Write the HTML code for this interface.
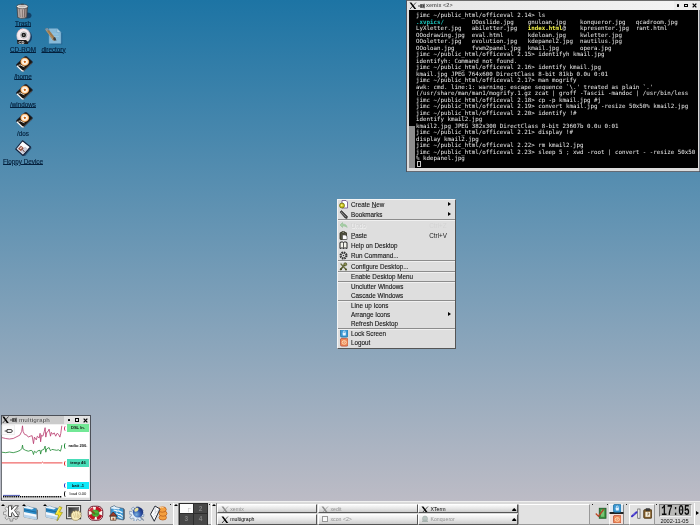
<!DOCTYPE html>
<html>
<head>
<meta charset="utf-8">
<title>KDE Desktop</title>
<style>
html,body{margin:0;padding:0;}
body{width:700px;height:525px;overflow:hidden;position:relative;
  background:linear-gradient(to bottom, rgb(29,116,164) 0px, rgb(196,191,199) 525px);
  font-family:"Liberation Sans",sans-serif;}
#root{position:absolute;left:0;top:0;width:700px;height:525px;will-change:transform;}
.abs{position:absolute;}
/* desktop icons */
.dlabel{position:absolute;font-size:6.300px;line-height:8px;color:#04203c;-webkit-text-stroke:0.150px #04203c;text-decoration:underline;text-decoration-thickness:0.800px;text-underline-offset:0.100px;white-space:nowrap;text-align:center;}
/* xterm */
#xterm{position:absolute;left:406px;top:0;width:294px;height:171.700px;background:#dcdcdc;box-sizing:border-box;border:0 solid #555;border-left:1px solid #4c5460;box-shadow:inset -0.600px -0.700px 0 #3c4450;}
#xterm .tbar{position:absolute;left:0;top:0;right:0;height:10px;background:linear-gradient(to right,#e6e6e6,#f4f4f4);border-top:1px solid #6c6c6c;box-sizing:border-box;}
.ttext{position:absolute;font-family:"Liberation Sans",sans-serif;font-weight:bold;color:#5c5c5c;font-size:6px;line-height:9px;white-space:nowrap;text-shadow:0.400px 0.400px 0 #fff;will-change:transform;}
#term{position:absolute;left:1.500px;top:10px;width:289.200px;height:157.700px;background:#000;}
#term pre{position:absolute;left:7.600px;top:2px;margin:0;font-family:"DejaVu Sans Mono","Liberation Mono",monospace;font-size:5.814px;line-height:6.500px;color:#ececec;letter-spacing:0;will-change:transform;}
#term .c{color:#1cc4bc;font-weight:bold;}
#term .y{color:#f0f048;font-weight:bold;}
#sbar{position:absolute;left:0.500px;top:116.100px;width:6px;height:41.600px;background:#8e8e8e;}
#cur{position:absolute;left:8.500px;top:150.700px;width:3.700px;height:6.200px;border:0.700px solid #c8c8c8;box-sizing:border-box;}
.xlogo{position:absolute;}
/* menu */
#menu{position:absolute;left:337px;top:199px;width:119px;height:150px;background:#dedede;box-sizing:border-box;border:1px solid;border-color:#f4f4f4 #555 #555 #f4f4f4;}
.mi{position:absolute;left:13px;font-size:6.3px;line-height:8px;color:#141414;-webkit-text-stroke:0.100px #141414;white-space:nowrap;}
.mi.dis{color:#d2d2d2;-webkit-text-stroke:0;text-shadow:0.500px 0.500px 0 #f4f4f4;}
.mi u{text-decoration-thickness:0.600px;text-underline-offset:0.200px;text-decoration-color:#777;}
.msep{position:absolute;left:0;right:0;height:0;border-top:1px solid #8c8c8c;border-bottom:1px solid #f0f0f0;}
.marr{position:absolute;left:109.800px;width:0;height:0;border-left:3.300px solid #000;border-top:2.500px solid transparent;border-bottom:2.500px solid transparent;margin-top:-0.300px;}
.macc{position:absolute;left:91.3px;font-size:6.3px;line-height:8px;color:#222;}
/* multigraph */
#mg{position:absolute;left:0;top:0;width:0;height:0;}
.wbtn{position:absolute;box-sizing:content-box;}
.glab{position:absolute;left:66.500px;width:22.900px;height:7.800px;font-size:4.100px;line-height:7.800px;font-weight:bold;color:#111;text-align:center;white-space:nowrap;}
.gmk{position:absolute;left:63.800px;width:2px;height:5.5px;border-left:1.2px solid;border-radius:3px 0 0 3px;box-sizing:border-box;}
/* panel */
#panel{position:absolute;left:0;top:501.400px;width:700px;height:23.600px;background:#dadada;border-top:0.600px solid #f0f0f0;border-bottom:0.800px solid #8c8c8c;box-sizing:border-box;}
.tri{position:absolute;width:0;height:0;border-bottom:2.300px solid #000;border-left:2.300px solid transparent;border-right:2.300px solid transparent;margin-left:-0.300px;}
.pg{position:absolute;width:13.400px;height:9.500px;background:#474747;color:#808080;font-size:6.500px;line-height:9.500px;text-align:center;font-weight:bold;}
.tb{position:absolute;height:9.5px;width:100px;box-sizing:border-box;background:linear-gradient(#fafafa,#e6e6e6 50%,#cdcdcd);border:0.500px solid #555;border-top-color:#fff;border-left-color:#fff;font-size:5.200px;line-height:8px;color:#909090;white-space:nowrap;overflow:hidden;}
.tb b{font-weight:normal;position:absolute;left:12px;top:0;}
.tb.act{color:#000;}
</style>
</head>
<body>
<div id="root">

<!-- ================= DESKTOP ICONS ================= -->
<div id="desk">
<svg class="abs" style="left:15.500px;top:2.800px" width="16" height="16.500" viewBox="0 0 32 33">
<defs><linearGradient id="tr" x1="0" x2="1"><stop offset="0" stop-color="#8c807c"/><stop offset="0.3" stop-color="#d8ccc8"/><stop offset="0.7" stop-color="#b4a4a0"/><stop offset="1" stop-color="#6c6060"/></linearGradient></defs>
<ellipse cx="22" cy="25" rx="9" ry="6" fill="#103458" opacity="0.800"/>
<path d="M2 8l1.500 21q8.500 4 18 0l1.500-21z" fill="url(#tr)" stroke="#3c3838" stroke-width="1.300"/>
<path d="M7.500 12l0.800 16M12.500 13v16M17.500 12l-0.800 16" stroke="#6c605c" stroke-width="1.800"/>
<ellipse cx="12.500" cy="7" rx="11.500" ry="4.500" fill="#e8e4e0" stroke="#3c3838" stroke-width="1.300"/>
<ellipse cx="12.500" cy="6.500" rx="7" ry="2.200" fill="#bcb4b0"/>
<path d="M9.500 2.500h6" stroke="#444" stroke-width="2"/>
</svg>
<svg class="abs" style="left:15.500px;top:28.200px" width="16.500" height="17" viewBox="0 0 33 34">
<defs><radialGradient id="cdg" cx="0.45" cy="0.4" r="0.6"><stop offset="0" stop-color="#fff"/><stop offset="0.6" stop-color="#f4e8ec"/><stop offset="1" stop-color="#c8c4d0"/></radialGradient></defs>
<ellipse cx="19" cy="18" rx="13" ry="14" fill="#102c50" opacity="0.800"/>
<ellipse cx="15" cy="15.500" rx="14" ry="14.500" fill="url(#cdg)" stroke="#8890a0" stroke-width="0.800"/>
<path d="M4 8q4-6 10-6" stroke="#f8c8d0" stroke-width="2" fill="none"/>
<path d="M26 22q-3 6-8 7" stroke="#d0e0c0" stroke-width="2" fill="none"/>
<circle cx="15.500" cy="14" r="6.500" fill="#e4e4e8" stroke="#666" stroke-width="0.800"/>
<circle cx="15.500" cy="14" r="4.600" fill="#181818"/>
<circle cx="15.500" cy="14" r="1.600" fill="#aaa"/>
<path d="M2 24h18l4 4v4H3z" fill="#1c1c1c"/>
<text x="5" y="31.500" font-family="Liberation Sans, sans-serif" font-weight="bold" font-size="8" fill="#f0f0f0">CD</text>
</svg>
<svg class="abs" style="left:44px;top:27px;opacity:0.820" width="18.500" height="17.500" viewBox="0 0 37 35">
<path d="M12 5h16l7 7v22H12z" fill="#1c4c78" opacity="0.500" transform="translate(1.500,1)"/>
<path d="M10 3h16l8 8v22H10z" fill="#9cc8e4" stroke="#6a9cc0" stroke-width="1"/>
<path d="M26 3v8h8z" fill="#d4e8f4" stroke="#6a9cc0" stroke-width="0.800"/>
<path d="M14 14h14M14 19h16M14 24h12" stroke="#b8dcf0" stroke-width="1.500"/>
<path d="M2 4l5-2 17 22-2 3-4 0z" fill="#b87838"/>
<path d="M2 4l5-2 3 4-5 2z" fill="#8c9cb0"/>
<path d="M18 22l4-2 3 7-5 0z" fill="#40342c"/>
<path d="M4 6l14 18" stroke="#e0a868" stroke-width="1.500"/>
</svg>
<svg class="abs" style="left:15.500px;top:56px" width="17" height="16" viewBox="0 0 34 32">
<defs><radialGradient id="pl0" cx="0.5" cy="0.5" r="0.5"><stop offset="0" stop-color="#b85810"/><stop offset="0.2" stop-color="#d87828"/><stop offset="0.32" stop-color="#fffaf2"/><stop offset="0.66" stop-color="#fce4c8"/><stop offset="0.86" stop-color="#eea458"/><stop offset="1" stop-color="#a05c20"/></radialGradient></defs>
<path d="M18 0.800Q20 0 22 1.500L32 10.500Q33.500 12.500 32 14.500L16 30Q13.600 31.500 11.500 30L1.500 20Q0 18 1.500 16Z" fill="#1a1612" stroke="#1c2c48" stroke-width="1.200"/>
<path d="M1.800 19.500L12 29.500Q13.800 30.600 15.500 29.300" stroke="#fbfbfb" stroke-width="2.600" fill="none"/>
<path d="M16 29l15.500-15" stroke="#8c8c8c" stroke-width="1.200"/>
<ellipse cx="17.500" cy="11.500" rx="9" ry="8.600" fill="url(#pl0)"/>
<path d="M5 18.500q4-2 7 1l5 2" stroke="#f4e4d0" stroke-width="1.800" fill="none"/>
</svg>
<svg class="abs" style="left:15.500px;top:84px" width="17" height="16" viewBox="0 0 34 32">
<defs><radialGradient id="pl1" cx="0.5" cy="0.5" r="0.5"><stop offset="0" stop-color="#b85810"/><stop offset="0.2" stop-color="#d87828"/><stop offset="0.32" stop-color="#fffaf2"/><stop offset="0.66" stop-color="#fce4c8"/><stop offset="0.86" stop-color="#eea458"/><stop offset="1" stop-color="#a05c20"/></radialGradient></defs>
<path d="M18 0.800Q20 0 22 1.500L32 10.500Q33.500 12.500 32 14.500L16 30Q13.600 31.500 11.500 30L1.500 20Q0 18 1.500 16Z" fill="#1a1612" stroke="#1c2c48" stroke-width="1.200"/>
<path d="M1.800 19.500L12 29.500Q13.800 30.600 15.500 29.300" stroke="#fbfbfb" stroke-width="2.600" fill="none"/>
<path d="M16 29l15.500-15" stroke="#8c8c8c" stroke-width="1.200"/>
<ellipse cx="17.500" cy="11.500" rx="9" ry="8.600" fill="url(#pl1)"/>
<path d="M5 18.500q4-2 7 1l5 2" stroke="#f4e4d0" stroke-width="1.800" fill="none"/>
</svg>
<svg class="abs" style="left:15.500px;top:111.600px" width="17" height="16" viewBox="0 0 34 32">
<defs><radialGradient id="pl2" cx="0.5" cy="0.5" r="0.5"><stop offset="0" stop-color="#b85810"/><stop offset="0.2" stop-color="#d87828"/><stop offset="0.32" stop-color="#fffaf2"/><stop offset="0.66" stop-color="#fce4c8"/><stop offset="0.86" stop-color="#eea458"/><stop offset="1" stop-color="#a05c20"/></radialGradient></defs>
<path d="M18 0.800Q20 0 22 1.500L32 10.500Q33.500 12.500 32 14.500L16 30Q13.600 31.500 11.500 30L1.500 20Q0 18 1.500 16Z" fill="#1a1612" stroke="#1c2c48" stroke-width="1.200"/>
<path d="M1.800 19.500L12 29.500Q13.800 30.600 15.500 29.300" stroke="#fbfbfb" stroke-width="2.600" fill="none"/>
<path d="M16 29l15.500-15" stroke="#8c8c8c" stroke-width="1.200"/>
<ellipse cx="17.500" cy="11.500" rx="9" ry="8.600" fill="url(#pl2)"/>
<path d="M5 18.500q4-2 7 1l5 2" stroke="#f4e4d0" stroke-width="1.800" fill="none"/>
</svg>
<svg class="abs" style="left:14.800px;top:139.500px" width="17" height="16.500" viewBox="0 0 34 33">
<path d="M17 3l15 12-14 17L3 19z" fill="#18304c" opacity="0.600" transform="translate(1.500,1)"/>
<path d="M15 1.500l16 12.500-15 17L1.500 18z" fill="#e6e6ec" stroke="#14223c" stroke-width="2.300" stroke-linejoin="round"/>
<path d="M15 4l13 10-5 6-13-10z" fill="#fbfbfd"/>
<path d="M6 17.500l6-6 6 5-6 6z" fill="#985040"/>
<path d="M9.500 17l3-3 2 1.500-3 3z" fill="#f0d8d0"/>
<path d="M12 23l8-9 5 4-8 9z" fill="#d0d0dc" stroke="#9a9aac" stroke-width="0.600"/>
<path d="M15 19l4 5" stroke="#70483c" stroke-width="2"/>
</svg>
<div class="dlabel" style="left:8px;top:19.900px;width:30px;">Trash</div>
<div class="dlabel" style="left:8px;top:45.900px;width:30px;">CD-ROM</div>
<div class="dlabel" style="left:38px;top:45.900px;width:31px;">directory</div>
<div class="dlabel" style="left:8px;top:73.400px;width:30px;">/home</div>
<div class="dlabel" style="left:8px;top:101.400px;width:30px;">/windows</div>
<div class="dlabel" style="left:8px;top:129.900px;width:30px;text-decoration:none;">/dos</div>
<div class="dlabel" style="left:0px;top:158.400px;width:46px;">Floppy Device</div>
</div>

<!-- ================= XTERM ================= -->
<div id="xterm">
 <div class="tbar"></div>
 <svg class="abs" style="left:2px;top:1.800px" width="8" height="7.500" viewBox="0 0 16 15"><path d="M1 1h3.800l9.700 13h-3.800z" fill="#000"/><path d="M14 1L2 14" stroke="#000" stroke-width="1.300"/></svg>
 <svg class="abs" style="left:10.500px;top:2.500px" width="7.500" height="6" viewBox="0 0 15 12"><path d="M0 6h5" stroke="#222" stroke-width="1.600"/><path d="M5.600 2v8" stroke="#222" stroke-width="1.600"/><rect x="6.400" y="3.600" width="4.600" height="4.800" fill="#888" stroke="#222" stroke-width="1.300"/><path d="M12.300 1.500v9" stroke="#222" stroke-width="1.800"/></svg>
 <div class="ttext" style="left:18.800px;top:1px;font-size:5.500px;">xemix &lt;2&gt;</div>
 <div class="abs" style="left:267px;top:1px;width:25.500px;height:9px;background:#ececec;"></div>
 <div class="wbtn" style="left:269.500px;top:4.400px;width:2.300px;height:2.300px;background:#000;border-radius:0.600px"></div>
 <div class="wbtn" style="left:276.800px;top:3.500px;width:1.900px;height:1.700px;border:1.200px solid #000;"></div>
 <svg class="abs" style="left:284.500px;top:3.100px" width="5" height="5" viewBox="0 0 6 6"><path d="M0.800 0.800l4.400 4.400M5.200 0.800L0.800 5.200" stroke="#000" stroke-width="1.500"/></svg>
 <div id="term">
<div id="sbar"></div><div id="cur"></div>
<pre>jimc ~/public_html/officeval 2.14&gt; ls
<span class="c">.xvpics/</span>        OOoslide.jpg    gnuloan.jpg    konqueror.jpg   qcadroom.jpg
LyXletter.jpg   abiletter.jpg   <span class="y">index.html</span>@    kpresenter.jpg  rant.html
OOodrawing.jpg  eval.html       kdeloan.jpg    kwletter.jpg
OOoletter.jpg   evolution.jpg   kdepanel2.jpg  nautilus.jpg
OOoloan.jpg     fvwm2panel.jpg  kmail.jpg      opera.jpg
jimc ~/public_html/officeval 2.15&gt; identifyh kmail.jpg
identifyh: Command not found.
jimc ~/public_html/officeval 2.16&gt; identify kmail.jpg
kmail.jpg JPEG 764x600 DirectClass 8-bit 81kb 0.0u 0:01
jimc ~/public_html/officeval 2.17&gt; man mogrify
awk: cmd. line:1: warning: escape sequence `\.' treated as plain `.'
(/usr/share/man/man1/mogrify.1.gz zcat | groff -Tascii -mandoc | /usr/bin/less
jimc ~/public_html/officeval 2.18&gt; cp -p kmail.jpg #j
jimc ~/public_html/officeval 2.19&gt; convert kmail.jpg -resize 50x50% kmail2.jpg
jimc ~/public_html/officeval 2.20&gt; identify !#
identify kmail2.jpg
kmail2.jpg JPEG 382x300 DirectClass 8-bit 23607b 0.0u 0:01
jimc ~/public_html/officeval 2.21&gt; display !#
display kmail2.jpg
jimc ~/public_html/officeval 2.22&gt; rm kmail2.jpg
jimc ~/public_html/officeval 2.23&gt; sleep 5 ; xwd -root | convert - -resize 50x50
% kdepanel.jpg
</pre>
 </div>
</div>

<!-- ================= CONTEXT MENU ================= -->
<div id="menu">
<div class="mi" style="top:0.85px">Create <u>N</u>ew</div>
<svg class="abs" style="left:1px;top:0.25px" width="9" height="9" viewBox="0 0 18 18"><path d="M6 1h8l3 3v12H6z" fill="#fff" stroke="#6a4a8a" stroke-width="1.6"/><circle cx="6" cy="11" r="5" fill="#c8c020" stroke="#6a6a10" stroke-width="1.5"/><circle cx="5.5" cy="10.5" r="1.8" fill="#f4f080"/></svg>
<div class="marr" style="top:2.60px"></div>
<div class="mi" style="top:10.85px">Bookmarks</div>
<svg class="abs" style="left:1px;top:10.25px" width="9" height="9" viewBox="0 0 18 18"><path d="M2 4l3-3 12 12-1 4-4-1z" fill="#444" stroke="#222" stroke-width="1"/><path d="M4 4l10 10" stroke="#999" stroke-width="1.5"/></svg>
<div class="marr" style="top:12.60px"></div>
<div class="mi dis" style="top:21.85px">Undo</div>
<svg class="abs" style="left:1px;top:21.25px" width="9" height="9" viewBox="0 0 18 18"><path d="M2 8l5-5v3c5 0 9 2 9 7-2-3-5-3-9-3v3z" fill="#a8d0a8" stroke="#88b888" stroke-width="1"/></svg>
<div class="macc dis" style="top:21.85px;color:#d4d4d4">Ctrl+Z</div>
<div class="mi" style="top:31.85px"><u>P</u>aste</div>
<svg class="abs" style="left:1px;top:31.25px" width="9" height="9" viewBox="0 0 18 18"><rect x="2" y="3" width="13" height="14" rx="1.5" fill="#554" stroke="#221" stroke-width="1.5"/><rect x="6" y="1" width="5" height="4" fill="#887" stroke="#221"/><path d="M7 8h6l3 3v6H7z" fill="#fff" stroke="#333" stroke-width="1"/></svg>
<div class="macc" style="top:31.85px">Ctrl+V</div>
<div class="mi" style="top:41.85px">Help on Desktop</div>
<svg class="abs" style="left:1px;top:41.25px" width="9" height="9" viewBox="0 0 18 18"><path d="M2 3c3-1.5 5-1.5 7 0 2-1.5 4-1.5 7 0v12c-3-1.5-5-1.5-7 0-2-1.5-4-1.5-7 0z" fill="#f4f4ec" stroke="#222" stroke-width="2"/><path d="M9 3v12" stroke="#222" stroke-width="1.5"/></svg>
<div class="mi" style="top:51.85px">Run Command...</div>
<svg class="abs" style="left:1px;top:51.25px" width="9" height="9" viewBox="0 0 18 18"><circle cx="9" cy="9" r="6" fill="none" stroke="#333" stroke-width="4" stroke-dasharray="3 1.7"/><circle cx="9" cy="9" r="4.5" fill="#eee" stroke="#333" stroke-width="1.5"/><circle cx="9" cy="9" r="1.6" fill="#333"/></svg>
<div class="mi" style="top:62.85px">Configure Desktop...</div>
<svg class="abs" style="left:1px;top:62.25px" width="9" height="9" viewBox="0 0 18 18"><path d="M3 15L13 4" stroke="#555a30" stroke-width="3.2" stroke-linecap="round"/><path d="M4 4l10 11" stroke="#6a7040" stroke-width="2.6" stroke-linecap="round"/><circle cx="12.5" cy="4.5" r="3" fill="#8a9050" stroke="#444820" stroke-width="1.2"/><circle cx="4" cy="14.5" r="2" fill="#444820"/><circle cx="14" cy="15" r="1.8" fill="#444820"/></svg>
<div class="mi" style="top:72.85px">Enable Desktop Menu</div>
<div class="mi" style="top:82.85px">Unclutter Windows</div>
<div class="mi" style="top:91.85px">Cascade Windows</div>
<div class="mi" style="top:101.85px">Line up Icons</div>
<div class="mi" style="top:110.85px">Arrange Icons</div>
<div class="marr" style="top:112.60px"></div>
<div class="mi" style="top:119.85px">Refresh Desktop</div>
<div class="mi" style="top:129.85px">Lock Screen</div>
<svg class="abs" style="left:1.5px;top:129.25px" width="8.5" height="8.5" viewBox="0 0 17 17"><rect x="0.8" y="0.8" width="15.4" height="15.4" rx="3" fill="#3a98d4" stroke="#1c6c9c" stroke-width="1.6"/><rect x="5.5" y="7.5" width="6" height="5.5" rx="1" fill="#e8f4ff"/><path d="M6.5 8V6a2 2 0 0 1 4 0v2" fill="none" stroke="#e8f4ff" stroke-width="1.4"/></svg>
<div class="mi" style="top:138.85px">Logout</div>
<svg class="abs" style="left:1.5px;top:138.25px" width="8.5" height="8.5" viewBox="0 0 17 17"><rect x="0.8" y="0.8" width="15.4" height="15.4" rx="3" fill="#ee8a58" stroke="#b84c38" stroke-width="1.6"/><ellipse cx="8.5" cy="8.8" rx="4.2" ry="3.6" fill="none" stroke="#ffe8c8" stroke-width="1.6"/><path d="M8.5 6.5v3.5" stroke="#ffe8c8" stroke-width="1.4"/></svg>
<div class="msep" style="top:19.40px"></div>
<div class="msep" style="top:59.80px"></div>
<div class="msep" style="top:70.90px"></div>
<div class="msep" style="top:80.70px"></div>
<div class="msep" style="top:99.80px"></div>
<div class="msep" style="top:127.70px"></div>
</div>

<!-- ================= MULTIGRAPH ================= -->
<div id="mg">
<div class="abs" style="left:1px;top:415px;width:90px;height:86.400px;background:#dadada;box-sizing:border-box;border:0.800px solid #4c5058;"></div>
<div class="abs" style="left:1.800px;top:415.800px;width:62.200px;height:8.600px;background:#cbcbcb;"></div>
<div class="abs" style="left:64px;top:415.800px;width:26.200px;height:8.600px;background:#e4e4e4;"></div>
<svg class="abs" style="left:2.200px;top:416.300px" width="7" height="7.500" viewBox="0 0 14 15"><path d="M0.500 1h3.800l9.200 13H9.700z" fill="#000"/><path d="M13 1L1.500 14" stroke="#000" stroke-width="1.300"/></svg>
<svg class="abs" style="left:10px;top:417px" width="7.500" height="6" viewBox="0 0 15 12"><path d="M0 6h5" stroke="#222" stroke-width="1.600"/><path d="M5.600 2v8" stroke="#222" stroke-width="1.600"/><rect x="6.400" y="3.600" width="4.600" height="4.800" fill="#888" stroke="#222" stroke-width="1.300"/><path d="M12.300 1.500v9" stroke="#222" stroke-width="1.800"/></svg>
<div class="ttext" style="left:18.600px;top:415.500px;">multigraph</div>
<div class="wbtn" style="left:67.700px;top:418.800px;width:2.400px;height:2.400px;background:#000;border-radius:0.600px"></div>
<div class="wbtn" style="left:74.900px;top:417.900px;width:1.900px;height:1.700px;border:1.200px solid #000;"></div>
<svg class="abs" style="left:82.800px;top:417.500px" width="5" height="5" viewBox="0 0 6 6"><path d="M0.800 0.800l4.400 4.400M5.200 0.800L0.800 5.200" stroke="#000" stroke-width="1.500"/></svg>
<svg class="abs" style="left:0;top:415px" width="92" height="87" viewBox="0 415 92 87">
<rect x="1.800" y="424.400" width="87.600" height="73.300" fill="#fff"/>
<rect x="2" y="425" width="12.600" height="9.800" fill="#fbfbfb" stroke="#e0e0e0" stroke-width="0.500"/>
<path d="M4.700 431h2.300M7 429.600h4c1.700 0 1.700 2.800 0 2.800H7z" fill="#fff" stroke="#222" stroke-width="0.900"/>
<polyline points="1.9,437.6 5.7,438.5 9.4,439.0 13.2,438.5 17.0,436.6 19.8,435.2 21.7,431.4 22.5,425.8 23.1,431.4 24.5,434.3 26.9,435.2 28.3,437.1 30.2,436.2 32.1,435.7 33.5,443.7 34.4,437.1 36.3,439.9 37.3,436.2 39.2,438.0 40.1,433.3 40.6,441.8 41.5,435.2 42.9,436.2 44.3,431.4 45.1,427.7 45.8,437.1 46.7,432.4 48.1,431.4 49.1,429.1 50.5,436.2 51.4,432.4 52.8,434.3 54.2,432.8 55.7,436.2 57.1,433.3 58.5,434.3 59.9,437.1 60.8,433.3 61.8,425.8" fill="none" stroke="#b8386c" stroke-width="0.8" stroke-linejoin="round"/>
<polyline points="1.9,452.2 5.7,452.7 9.4,452.0 13.2,452.7 17.0,451.7 20.3,450.3 21.9,448.4 22.5,445.1 23.1,448.9 25.5,450.3 28.3,451.2 31.1,450.3 32.5,451.2 33.5,454.5 34.4,451.2 36.3,452.7 37.7,450.8 40.1,450.3 40.6,454.1 41.5,450.3 43.9,449.4 45.1,446.1 45.8,452.2 46.7,448.9 49.1,447.5 50.5,450.8 51.9,449.4 54.2,449.8 56.6,450.3 58.5,449.8 60.4,451.2 61.3,448.4 61.8,445.1" fill="none" stroke="#1c8830" stroke-width="0.8" stroke-linejoin="round"/>
<polyline points="1.8,462.9 41.5,462.9 42.5,462.1 43.5,462.9 62.5,462.9" fill="none" stroke="#ec4444" stroke-width="1" stroke-linejoin="round"/>
<path d="M3 495.400h17" stroke="#2030a0" stroke-width="0.800"/>
<path d="M3 496.800h59" stroke="#000" stroke-width="1.600" stroke-dasharray="1.400 0.700"/>
</svg>
<div class="glab" style="top:424.400px;background:#72e896;">DSL In.</div>
<div class="glab" style="top:441.800px;">radio 200.</div>
<div class="glab" style="top:459.400px;background:#48dcb8;">temp 46</div>
<div class="glab" style="top:481.500px;background:#10e8f8;">batt -1</div>
<div class="glab" style="top:490.400px;font-weight:normal;">load 0.00</div>
<div class="gmk" style="top:425.700px;border-color:#d03070"></div>
<div class="gmk" style="top:443px;border-color:#1c8a34"></div>
<div class="gmk" style="top:460.600px;border-color:#e02020"></div>
<div class="gmk" style="top:482.700px;border-color:#2030c0"></div>
<div class="gmk" style="top:491px;border-color:#111"></div>
</div>

<!-- ================= PANEL ================= -->
<div id="panel"></div>
<div id="pitems">
<div class="tri" style="left:1.2px;top:503.6px"></div>
<div class="tri" style="left:22.4px;top:503.6px"></div>
<div class="tri" style="left:43px;top:503.6px"></div>
<svg class="abs" style="left:3px;top:504px" width="17" height="17.500" viewBox="0 0 34 35">
<defs><linearGradient id="kg" x1="0" y1="0" x2="1" y2="1"><stop offset="0" stop-color="#fdfdfd"/><stop offset="1" stop-color="#bcbcbc"/></linearGradient></defs>
<path d="M27.9 15.6L32.6 15.9L32.6 21.1L27.9 21.4L26.7 24.3L29.8 27.8L26.1 31.5L22.6 28.4L19.7 29.6L19.4 34.3L14.2 34.3L13.9 29.6L11.0 28.4L7.5 31.5L3.8 27.8L6.9 24.3L5.7 21.4L1.0 21.1L1.0 15.9L5.7 15.6L6.9 12.7L3.8 9.2L7.5 5.5L11.0 8.6L13.9 7.4L14.2 2.7L19.4 2.7L19.7 7.4L22.6 8.6L26.1 5.5L29.8 9.2L26.7 12.7Z" fill="url(#kg)" stroke="#808080" stroke-width="1.500" stroke-linejoin="round"/>
<path d="M11 3.500h6v8l6.500-8h7.500l-8 9.200 8.500 12.300h-7.600l-5.200-8.300-1.700 1.800v6.500h-6z" fill="#fff" stroke="#4a4a4a" stroke-width="1.900" stroke-linejoin="round"/>
</svg>
<svg class="abs" style="left:23.4px;top:505.3px" width="16" height="15.5" viewBox="0 0 32 31">
<path d="M27 8l3 2v18l-3 2z" fill="#777"/>
<path d="M2 4l8-2 4 2 13 3v22L2 24z" fill="#2c8cc8" stroke="#5a6a78" stroke-width="1"/>
<path d="M2 4l8-2 4 2 8 2-4 3L2 6z" fill="#e8f2fa"/>
<path d="M2 14l25 5v10L2 24z" fill="#f4f8fc"/>
<path d="M2 19l25 5v5L2 24z" fill="#b8d4ec"/>
<path d="M2 9.500l25 5" stroke="#1a6aa0" stroke-width="2"/>
</svg>
<svg class="abs" style="left:44.6px;top:505.3px" width="14" height="15.5" viewBox="0 0 28 31">
<path d="M27 8l3 2v18l-3 2z" fill="#777"/>
<path d="M2 4l8-2 4 2 13 3v22L2 24z" fill="#2c8cc8" stroke="#5a6a78" stroke-width="1"/>
<path d="M2 4l8-2 4 2 8 2-4 3L2 6z" fill="#e8f2fa"/>
<path d="M2 14l25 5v10L2 24z" fill="#f4f8fc"/>
<path d="M2 19l25 5v5L2 24z" fill="#b8d4ec"/>
<path d="M2 9.500l25 5" stroke="#1a6aa0" stroke-width="2"/>
</svg>
<svg class="abs" style="left:53.5px;top:505.5px" width="9" height="15.5" viewBox="0 0 18 31">
<path d="M11 1l5 2-5 9 6 1-11 17 3-12-7-1z" fill="#f4e020" stroke="#8a8a20" stroke-width="1.2" stroke-linejoin="round"/>
<path d="M11 3l-6 12" stroke="#fff8a0" stroke-width="1.5"/></svg>
<svg class="abs" style="left:66px;top:504.800px" width="16.500" height="16.500" viewBox="0 0 33 33">
<defs><linearGradient id="scr" x1="0" y1="0" x2="1" y2="1"><stop offset="0" stop-color="#2a2a2a"/><stop offset="1" stop-color="#909090"/></linearGradient></defs>
<rect x="1.200" y="1" width="28" height="26.500" fill="#e8e8e8" stroke="#3a3a3a" stroke-width="2"/>
<rect x="5" y="5" width="20.500" height="18.500" fill="url(#scr)" stroke="#505050" stroke-width="1"/>
<path d="M12 27C9 22 10 16 13 15C13 12 16 11 17.500 13.500C18 10.500 21.500 10 22.500 13C24 10.500 27.500 11.500 27 14.500C29.500 13.500 31.500 16.500 29.500 19C31.500 21 30.500 25 27.500 26C26 30 21 31.500 17 30.500C14.500 30.500 13 29 12 27Z" fill="#f8ecbc" stroke="#84703c" stroke-width="1.100" stroke-linejoin="round"/>
<path d="M14.500 17l3 9M18.500 15l1.500 10M23 15l-0.500 10M26.500 17l-3 8.500M29 20l-5 6" stroke="#c4ac6c" stroke-width="1"/>
</svg>
<svg class="abs" style="left:87.200px;top:504.800px" width="17" height="16.500" viewBox="0 0 34 33">
<rect x="2.500" y="2.500" width="29" height="28" rx="10" fill="#fbf8f0" stroke="#6c1c30" stroke-width="2"/>
<path d="M18 3.500q9 0 12 8l-7 3.500q-1.500-4-6-4.500z" fill="#c41424"/>
<path d="M3.500 20q1 8 11 9.500l2-7q-4-1-6-4.500z" fill="#c41424"/>
<path d="M3.500 12q1.500-6 8-8l2 6q-3 1-4 3.500z" fill="#d43040"/>
<path d="M30.500 21q-2 7-10 8.500l-1.500-6q4-1 5.500-5z" fill="#b81424"/>
<rect x="10" y="10" width="14" height="13" rx="5.500" fill="#50b838" stroke="#2c7420" stroke-width="1"/>
<path d="M9 12l7 6" stroke="#8a4a20" stroke-width="3.500"/>
<path d="M13 18h10" stroke="#2c9020" stroke-width="2"/>
</svg>
<svg class="abs" style="left:108.600px;top:505.300px" width="16.500" height="16" viewBox="0 0 33 32">
<path d="M29 7l2.500 2v19l-2.500 2z" fill="#4a5868"/>
<path d="M3.500 4.500l7-3 4 2.500 14.500 3v23L3.500 25z" fill="#3c98d4" stroke="#3c4c60" stroke-width="1.300" stroke-linejoin="round"/>
<path d="M4 5l6.500-2.800 4 2.300 8 1.700-3 3L4 7z" fill="#e4f0fa"/>
<path d="M9 10.500c4-2 6 3 9 1.500s5 3.500 9 2.500M14 16c3 0 4 4 7 3s4 4 7 3.500M18 23c3 0 4 3 9 3.500" stroke="#eef6fc" stroke-width="2.400" fill="none"/>
<path d="M0.800 22.500l7.700-8.500 7.700 8.500z" fill="#a03c28" stroke="#3c1c14" stroke-width="1.300" stroke-linejoin="round"/>
<path d="M3 22.500h11v8H3z" fill="#f8e4cc" stroke="#3c2818" stroke-width="1.300"/>
<path d="M7 25.500h3.500v5H7z" fill="#a45c3c"/>
</svg>
<svg class="abs" style="left:129px;top:504.800px" width="16.500" height="16.500" viewBox="0 0 33 33">
<defs><radialGradient id="gl" cx="0.350" cy="0.720" r="0.800"><stop offset="0" stop-color="#78b0e0"/><stop offset="0.550" stop-color="#2c50a4"/><stop offset="1" stop-color="#182868"/></radialGradient></defs>
<path d="M25.5 17.4L30.0 18.5L29.0 23.4L24.4 22.7L22.9 25.0L25.2 29.0L21.1 31.7L18.4 27.9L15.6 28.5L14.5 33.0L9.6 32.0L10.3 27.4L8.0 25.9L4.0 28.2L1.3 24.1L5.1 21.4L4.5 18.6L0.0 17.5L1.0 12.6L5.6 13.3L7.1 11.0L4.8 7.0L8.9 4.3L11.6 8.1L14.4 7.5L15.5 3.0L20.4 4.0L19.7 8.6L22.0 10.1L26.0 7.8L28.7 11.9L24.9 14.6Z" fill="#e0ecf8" stroke="#7890ac" stroke-width="1.500" stroke-linejoin="round"/>
<circle cx="18" cy="14.500" r="10.300" fill="url(#gl)"/>
<path d="M12.500 7c3-2.500 7-1.500 6.500 1.500s-3 5-6 5-3.500-4-0.500-6.500z" fill="#ece49c"/>
<path d="M23 24l6.500 7" stroke="#6c7c94" stroke-width="2.200"/>
</svg>
<svg class="abs" style="left:149.500px;top:504.500px" width="18" height="17" viewBox="0 0 36 34">
<g fill="#f4a040" stroke="#b85c18" stroke-width="1.500"><ellipse cx="25.500" cy="25" rx="7.500" ry="5"/><ellipse cx="26" cy="17" rx="8" ry="5.500"/><ellipse cx="24.500" cy="9" rx="8" ry="5.500"/></g>
<path d="M19 5.500q4-2.500 8-0.500" stroke="#fcdcac" stroke-width="2.200" fill="none"/>
<path d="M10 2l10 6-11.500 24.500-7.500-14z" fill="#fcfcfc" stroke="#262a34" stroke-width="2" stroke-linejoin="round"/>
<path d="M10 3.500l0.500 12 8.500-7" fill="none" stroke="#a0a8bc" stroke-width="1.100"/>
<path d="M6 19l6-3M7 23l5-2.500" stroke="#b8c0d0" stroke-width="1"/>
</svg>
<div class="abs" style="left:169.8px;top:504.2px;width:1.3px;height:1.3px;background:#222"></div>
<div class="abs" style="left:172.500px;top:503px;width:6.500px;height:22px;background:#e2e2e2;border-left:0.500px solid #fff;border-right:0.500px solid #888;box-sizing:border-box"></div>
<div class="tri" style="left:174.1px;top:504.3px"></div>
<div class="abs" style="left:179px;top:503px;width:28.500px;height:22px;background:#2c2c2c;"></div>
<div class="pg" style="left:179.500px;top:503.500px;background:#fcfcfc;color:#bbb;"><span style="position:relative;left:2px;top:-1px;">&#9484;</span></div>
<div class="pg" style="left:193.800px;top:503.500px;">2</div>
<div class="pg" style="left:179.500px;top:513.500px;height:11px;">3</div>
<div class="pg" style="left:193.800px;top:513.500px;height:11px;">4</div>
<div class="abs" style="left:208.8px;top:504.2px;width:1.3px;height:1.3px;background:#222"></div>
<div class="abs" style="left:211px;top:503px;width:6px;height:22px;background:#e2e2e2;border-left:0.500px solid #fff;border-right:0.500px solid #888;box-sizing:border-box"></div>
<div class="tri" style="left:212px;top:504.3px"></div>
<div class="tb" style="left:217.2px;top:503.7px;height:9.5px"><svg class="abs" style="left:2.500px;top:1px" width="8" height="7.500" viewBox="0 0 16 15"><path d="M1 1h3.800l9.700 13h-3.800z" fill="#8c8c8c"/><path d="M14 1L2 14" stroke="#8c8c8c" stroke-width="1.300"/></svg><b>xemix</b></div>
<div class="tb" style="left:317.5px;top:503.7px;height:9.5px"><svg class="abs" style="left:2.500px;top:1px" width="8" height="7.500" viewBox="0 0 16 15"><path d="M1 1h3.800l9.700 13h-3.800z" fill="#8c8c8c"/><path d="M14 1L2 14" stroke="#8c8c8c" stroke-width="1.300"/></svg><b>xedit</b></div>
<div class="tb act" style="left:417.5px;top:503.7px;height:9.5px"><svg class="abs" style="left:2.500px;top:1px" width="8" height="7.500" viewBox="0 0 16 15"><path d="M1 1h3.800l9.700 13h-3.800z" fill="#000"/><path d="M14 1L2 14" stroke="#000" stroke-width="1.300"/></svg><b>XTerm</b><svg class="abs" style="left:93.800px;top:2.900px" width="4.400" height="3" viewBox="0 0 8.800 6"><path d="M4.400 0L8.400 3.800V5.800H0.400V3.800z" fill="#000"/></svg></div>
<div class="tb act" style="left:217.2px;top:513.7px;height:11.3px"><svg class="abs" style="left:2.500px;top:1px" width="8" height="7.500" viewBox="0 0 16 15"><path d="M1 1h3.800l9.700 13h-3.800z" fill="#000"/><path d="M14 1L2 14" stroke="#000" stroke-width="1.300"/></svg><b>multigraph</b></div>
<div class="tb" style="left:317.5px;top:513.7px;height:11.3px"><div class="abs" style="left:3px;top:1.500px;width:6px;height:5.500px;box-sizing:border-box;border:0.600px solid #999;border-top-width:1.400px;background:#f8f8f8"></div><b>xcon &lt;2&gt;</b></div>
<div class="tb" style="left:417.5px;top:513.7px;height:11.3px"><svg class="abs" style="left:2.500px;top:0.800px" width="8" height="8" viewBox="0 0 16 16"><circle cx="8" cy="7" r="5" fill="#b8c4c0" stroke="#98a4a0"/><path d="M2 13h12M4 9v5M8 9v5M12 9v5" stroke="#a0aca8" stroke-width="1.500"/></svg><b>Konqueror</b><svg class="abs" style="left:93.800px;top:2.900px" width="4.400" height="3" viewBox="0 0 8.800 6"><path d="M4.400 0L8.400 3.800V5.800H0.400V3.800z" fill="#000"/></svg></div>
<div class="abs" style="left:517.500px;top:503.700px;width:72.500px;height:21.300px;background:#e2e2e2;border:0.500px solid #999;border-top-color:#fff;box-sizing:border-box"></div>
<div class="abs" style="left:591.5px;top:504.2px;width:1.3px;height:1.3px;background:#222"></div>
<svg class="abs" style="left:594.500px;top:507px" width="12" height="12" viewBox="0 0 24 24">
<rect x="8.500" y="2.500" width="13.500" height="20" fill="#3c9440" stroke="#1c5424" stroke-width="1.600"/>
<rect x="12" y="5.500" width="6.500" height="14" fill="#78c474"/>
<path d="M1.500 13l5.500 5.500 10.500-14" fill="none" stroke="#b44428" stroke-width="2.600" stroke-linejoin="round"/>
<path d="M2.500 12.500l4 4" stroke="#e89060" stroke-width="1.200"/>
</svg>
<div class="abs" style="left:606.5px;top:504.2px;width:1.3px;height:1.3px;background:#222"></div>
<div class="abs" style="left:609.300px;top:503.700px;width:15px;height:9.400px;box-sizing:border-box;background:#dfe9f2;border:0.500px solid #888;border-top-color:#f8f8f8;border-left-color:#f8f8f8;border-bottom:0.400px solid #222"></div>
<div class="abs" style="left:609.300px;top:513.100px;width:15px;height:11.900px;box-sizing:border-box;background:#f2e0da;border:0.500px solid #888;border-left-color:#f8f8f8;border-top:0.400px solid #222"></div>
<svg class="abs" style="left:612.800px;top:504px" width="8.600" height="8.600" viewBox="0 0 17 17"><rect x="0.800" y="0.800" width="15.400" height="15.400" rx="3" fill="#3a98d4" stroke="#1c6c9c" stroke-width="1.600"/><rect x="5.500" y="7.500" width="6" height="5.500" rx="1" fill="#e8f4ff"/><path d="M6.500 8V6a2 2 0 0 1 4 0v2" fill="none" stroke="#e8f4ff" stroke-width="1.400"/></svg>
<svg class="abs" style="left:612.800px;top:514.600px" width="8.600" height="8.600" viewBox="0 0 17 17"><rect x="0.800" y="0.800" width="15.400" height="15.400" rx="3" fill="#ee8a58" stroke="#b84c38" stroke-width="1.600"/><ellipse cx="8.500" cy="8.800" rx="4.200" ry="3.600" fill="none" stroke="#ffe8c8" stroke-width="1.600"/><path d="M8.500 6.500v3.500" stroke="#ffe8c8" stroke-width="1.400"/></svg>
<div class="abs" style="left:625.6px;top:504.2px;width:1.3px;height:1.3px;background:#222"></div>
<div class="abs" style="left:628.500px;top:503.700px;width:26.500px;height:21.300px;background:#e2e2e2;border:0.500px solid #999;border-top-color:#fff;border-left-color:#fff;box-sizing:border-box"></div>
<svg class="abs" style="left:630.500px;top:508px" width="10" height="11" viewBox="0 0 20 22">
<rect x="13.500" y="2" width="4.500" height="18.500" fill="#f8f8f8" stroke="#505050" stroke-width="1.400"/>
<path d="M2 16.500l9-8" stroke="#3c30c4" stroke-width="4" stroke-linecap="round"/><path d="M4 14l5-4" stroke="#8478ec" stroke-width="1.400"/>
</svg>
<svg class="abs" style="left:642.600px;top:507.600px" width="9.600" height="11" viewBox="0 0 20 23">
<rect x="1.500" y="3.500" width="17" height="18" rx="2" fill="#86602c" stroke="#443014" stroke-width="1.700"/>
<rect x="6" y="0.800" width="8" height="5" rx="1" fill="#3c3c3c" stroke="#222" stroke-width="1"/>
<rect x="5" y="8" width="10" height="10.500" fill="#f6eedc"/>
<path d="M9 10.500h3v3h-2v2.500" stroke="#6a5430" stroke-width="1.400" fill="none"/>
</svg>
<div class="abs" style="left:655.7px;top:504.2px;width:1.3px;height:1.3px;background:#222"></div>
<div class="abs" style="left:658.500px;top:503.500px;width:33.300px;height:13.300px;background:#b8b8b6;border:0.500px solid #7c7c7c;border-bottom-color:#eee;border-right-color:#eee;box-sizing:border-box"></div>
<div class="abs" id="clock" style="left:653.300px;top:505px;width:45px;height:13px;text-align:center;font-family:'Liberation Mono',monospace;font-weight:bold;font-size:15px;line-height:13.600px;color:#0a0a0a;transform:scaleX(0.630);transform-origin:50% 50%;">17:05</div>
<div class="abs" style="left:656px;top:518px;width:37px;text-align:center;font-size:5.600px;line-height:7px;color:#111;">2002-11-05</div>
<div class="abs" style="left:693.500px;top:503px;width:6.500px;height:22px;background:#dedede;border-left:0.500px solid #fff;box-sizing:border-box"></div>
<div class="abs" style="left:695.900px;top:510.900px;width:0;height:0;border-left:3.100px solid #000;border-top:2.500px solid transparent;border-bottom:2.500px solid transparent"></div>
</div>

</div>
</body>
</html>
